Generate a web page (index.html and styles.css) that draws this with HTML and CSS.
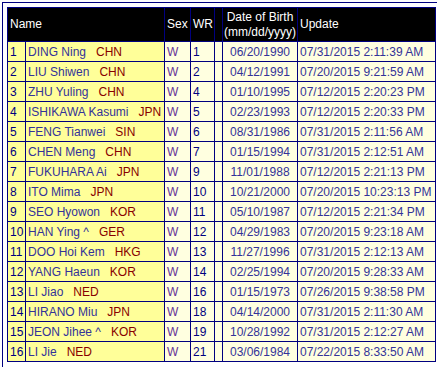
FILE: index.html
```html
<!DOCTYPE html>
<html>
<head>
<meta charset="utf-8">
<link rel="stylesheet" href="styles.css">
</head>
<body>
<div class="frame">
<table class="rank">
<colgroup>
<col class="c-no"><col class="c-name"><col class="c-sex"><col class="c-wr"><col class="c-gap"><col class="c-dob"><col class="c-upd">
</colgroup>
<thead>
<tr>
<th colspan="2" class="h-name">Name</th>
<th>Sex</th>
<th>WR</th>
<th></th>
<th class="h-dob">Date of Birth<br>(mm/dd/yyyy)</th>
<th>Update</th>
</tr>
</thead>
<tbody>
<tr><td class="no">1</td><td class="nm">DING Ning&nbsp;&nbsp;&nbsp;<span class="ct">CHN</span></td><td class="sx">W</td><td class="wr">1</td><td class="gp"></td><td class="dob">06/20/1990</td><td class="up">07/31/2015 2:11:39 AM</td></tr>
<tr><td class="no">2</td><td class="nm">LIU Shiwen&nbsp;&nbsp;&nbsp;<span class="ct">CHN</span></td><td class="sx">W</td><td class="wr">2</td><td class="gp"></td><td class="dob">04/12/1991</td><td class="up">07/20/2015 9:21:59 AM</td></tr>
<tr><td class="no">3</td><td class="nm">ZHU Yuling&nbsp;&nbsp;&nbsp;<span class="ct">CHN</span></td><td class="sx">W</td><td class="wr">4</td><td class="gp"></td><td class="dob">01/10/1995</td><td class="up">07/12/2015 2:20:23 PM</td></tr>
<tr><td class="no">4</td><td class="nm">ISHIKAWA Kasumi&nbsp;&nbsp;&nbsp;<span class="ct">JPN</span></td><td class="sx">W</td><td class="wr">5</td><td class="gp"></td><td class="dob">02/23/1993</td><td class="up">07/12/2015 2:20:33 PM</td></tr>
<tr><td class="no">5</td><td class="nm">FENG Tianwei&nbsp;&nbsp;&nbsp;<span class="ct">SIN</span></td><td class="sx">W</td><td class="wr">6</td><td class="gp"></td><td class="dob">08/31/1986</td><td class="up">07/31/2015 2:11:56 AM</td></tr>
<tr><td class="no">6</td><td class="nm">CHEN Meng&nbsp;&nbsp;&nbsp;<span class="ct">CHN</span></td><td class="sx">W</td><td class="wr">7</td><td class="gp"></td><td class="dob">01/15/1994</td><td class="up">07/31/2015 2:12:51 AM</td></tr>
<tr><td class="no">7</td><td class="nm">FUKUHARA Ai&nbsp;&nbsp;&nbsp;<span class="ct">JPN</span></td><td class="sx">W</td><td class="wr">9</td><td class="gp"></td><td class="dob">11/01/1988</td><td class="up">07/12/2015 2:21:13 PM</td></tr>
<tr><td class="no">8</td><td class="nm">ITO Mima&nbsp;&nbsp;&nbsp;<span class="ct">JPN</span></td><td class="sx">W</td><td class="wr">10</td><td class="gp"></td><td class="dob">10/21/2000</td><td class="up">07/20/2015 10:23:13 PM</td></tr>
<tr><td class="no">9</td><td class="nm">SEO Hyowon&nbsp;&nbsp;&nbsp;<span class="ct">KOR</span></td><td class="sx">W</td><td class="wr">11</td><td class="gp"></td><td class="dob">05/10/1987</td><td class="up">07/12/2015 2:21:34 PM</td></tr>
<tr><td class="no">10</td><td class="nm">HAN Ying ^&nbsp;&nbsp;&nbsp;<span class="ct">GER</span></td><td class="sx">W</td><td class="wr">12</td><td class="gp"></td><td class="dob">04/29/1983</td><td class="up">07/20/2015 9:23:18 AM</td></tr>
<tr><td class="no">11</td><td class="nm">DOO Hoi Kem&nbsp;&nbsp;&nbsp;<span class="ct">HKG</span></td><td class="sx">W</td><td class="wr">13</td><td class="gp"></td><td class="dob">11/27/1996</td><td class="up">07/31/2015 2:12:13 AM</td></tr>
<tr><td class="no">12</td><td class="nm">YANG Haeun&nbsp;&nbsp;&nbsp;<span class="ct">KOR</span></td><td class="sx">W</td><td class="wr">14</td><td class="gp"></td><td class="dob">02/25/1994</td><td class="up">07/20/2015 9:28:33 AM</td></tr>
<tr><td class="no">13</td><td class="nm">LI Jiao&nbsp;&nbsp;&nbsp;<span class="ct">NED</span></td><td class="sx">W</td><td class="wr">16</td><td class="gp"></td><td class="dob">01/15/1973</td><td class="up">07/26/2015 9:38:58 PM</td></tr>
<tr><td class="no">14</td><td class="nm">HIRANO Miu&nbsp;&nbsp;&nbsp;<span class="ct">JPN</span></td><td class="sx">W</td><td class="wr">18</td><td class="gp"></td><td class="dob">04/14/2000</td><td class="up">07/31/2015 2:11:30 AM</td></tr>
<tr><td class="no">15</td><td class="nm">JEON Jihee ^&nbsp;&nbsp;&nbsp;<span class="ct">KOR</span></td><td class="sx">W</td><td class="wr">19</td><td class="gp"></td><td class="dob">10/28/1992</td><td class="up">07/31/2015 2:12:27 AM</td></tr>
<tr><td class="no">16</td><td class="nm">LI Jie&nbsp;&nbsp;&nbsp;<span class="ct">NED</span></td><td class="sx">W</td><td class="wr">21</td><td class="gp"></td><td class="dob">03/06/1984</td><td class="up">07/22/2015 8:33:50 AM</td></tr>
</tbody>
</table>
</div>
</body>
</html>
```

FILE: styles.css
```css
html, body {
  margin: 0;
  padding: 0;
  overflow: hidden;
  background: #ffffff;
}

.frame {
  margin: 2px 0 0 2px;
  width: 435px;
  height: 365px;
  border-top: 1px solid #000080;
  border-left: 1px solid #000080;
  padding: 4px 0 0 4px;
  box-sizing: border-box;
}

.rank {
  border-collapse: collapse;
  table-layout: fixed;
  width: 429px;
  font-family: "Liberation Sans", Arial, sans-serif;
  font-size: 12px;
  border: 1px solid #000080;
}

.c-no { width: 18px; }
.c-name { width: 139px; }
.c-sex { width: 26px; }
.c-wr { width: 24px; }
.c-gap { width: 8px; }
.c-dob { width: 75px; }
.c-upd { width: 138px; }

.rank th,
.rank td {
  border: 1px solid #000080;
  padding: 0 2px;
  white-space: nowrap;
  overflow: hidden;
}

.rank th {
  background: #000000;
  color: #ffffff;
  font-weight: normal;
  text-align: left;
  vertical-align: middle;
  height: 33px;
  line-height: 15px;
}

.rank th.h-dob {
  text-align: center;
  padding: 0;
}

.rank td {
  height: 19px;
  line-height: 14px;
  vertical-align: middle;
}

.no, .nm {
  background: #ffff99;
}

.sx, .wr, .gp, .dob, .up {
  background: #ffffe0;
}

.no { color: #000080; }
.nm { color: #333399; padding-left: 3px; }
.ct { color: #880000; }
.sx { color: #663399; }
.wr { color: #000080; }
.dob { color: #333399; text-align: center; padding: 0; }
.up { color: #333399; }
```
